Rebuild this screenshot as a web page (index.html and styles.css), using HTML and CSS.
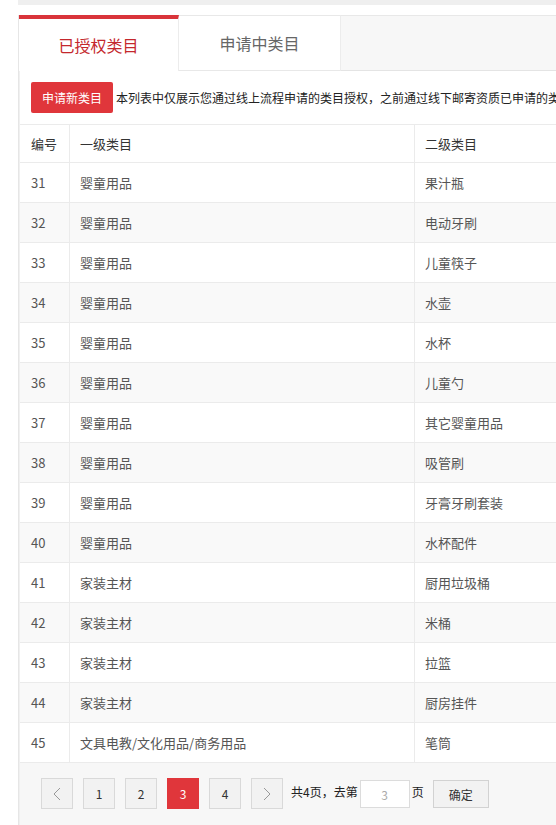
FILE: index.html
```html
<!DOCTYPE html>
<html lang="zh-CN">
<head>
<meta charset="utf-8">
<title>类目授权</title>
<link rel="stylesheet" href="styles.css">
</head>
<body>
<div class="wrap">
  <div class="top-strip"></div>
  <div class="panel">
    <div class="tabs">
      <div class="tab active">已授权类目</div>
      <div class="tab">申请中类目</div>
      <div class="tab-rest"></div>
    </div>
    <div class="content">
      <div class="toolbar">
        <button class="btn-apply">申请新类目</button>
        <span class="notice">本列表中仅展示您通过线上流程申请的类目授权，之前通过线下邮寄资质已申请的类</span>
      </div>
      <table class="grid">
        <thead>
          <tr><th class="c-no">编号</th><th class="c-l1">一级类目</th><th class="c-l2">二级类目</th></tr>
        </thead>
        <tbody>
          <tr><td>31</td><td>婴童用品</td><td>果汁瓶</td></tr>
          <tr><td>32</td><td>婴童用品</td><td>电动牙刷</td></tr>
          <tr><td>33</td><td>婴童用品</td><td>儿童筷子</td></tr>
          <tr><td>34</td><td>婴童用品</td><td>水壶</td></tr>
          <tr><td>35</td><td>婴童用品</td><td>水杯</td></tr>
          <tr><td>36</td><td>婴童用品</td><td>儿童勺</td></tr>
          <tr><td>37</td><td>婴童用品</td><td>其它婴童用品</td></tr>
          <tr><td>38</td><td>婴童用品</td><td>吸管刷</td></tr>
          <tr><td>39</td><td>婴童用品</td><td>牙膏牙刷套装</td></tr>
          <tr><td>40</td><td>婴童用品</td><td>水杯配件</td></tr>
          <tr><td>41</td><td>家装主材</td><td>厨用垃圾桶</td></tr>
          <tr><td>42</td><td>家装主材</td><td>米桶</td></tr>
          <tr><td>43</td><td>家装主材</td><td>拉篮</td></tr>
          <tr><td>44</td><td>家装主材</td><td>厨房挂件</td></tr>
          <tr><td>45</td><td>文具电教/文化用品/商务用品</td><td>笔筒</td></tr>
        </tbody>
      </table>
      <div class="pager">
        <span class="pg prev"><svg width="8" height="14" viewBox="0 0 8 14"><path d="M7 1 L1 7 L7 13" fill="none" stroke="#999" stroke-width="1"/></svg></span>
        <span class="pg">1</span>
        <span class="pg">2</span>
        <span class="pg current">3</span>
        <span class="pg">4</span>
        <span class="pg next"><svg width="8" height="14" viewBox="0 0 8 14"><path d="M1 1 L7 7 L1 13" fill="none" stroke="#999" stroke-width="1"/></svg></span>
        <span class="pg-text">共4页，去第</span>
        <input class="pg-input" type="text" value="3">
        <span class="pg-unit">页</span>
        <button class="pg-ok">确定</button>
      </div>
    </div>
  </div>
</div>
</body>
</html>
```

FILE: styles.css
```css
html, body {
  margin: 0;
  padding: 0;
  background: #fff;
  overflow: hidden;
}
body {
  font-family: "Microsoft YaHei", "Noto Sans CJK SC", "Noto Sans", sans-serif;
  color: #333;
  font-size: 12px;
}
.wrap {
  margin-left: 18px;
  width: 538px;
  overflow: hidden;
}
.top-strip {
  height: 5px;
  background: #efefef;
  margin-bottom: 10px;
}
.panel {
  border-left: 1px solid #e6e6e6;
}
.tabs {
  display: flex;
  height: 56px;
}
.tab {
  width: 160px;
  box-sizing: border-box;
  border-top: 1px solid #e8e8e8;
  border-right: 1px solid #ececec;
  border-bottom: 1px solid #e8e8e8;
  background: #fff;
  display: flex;
  align-items: center;
  justify-content: center;
  font-size: 16px;
  color: #666;
}
.tab + .tab {
  width: 162px;
}
.tab.active {
  border-top: 4px solid #d9343a;
  border-bottom: none;
  color: #c4282d;
}
.tab-rest {
  flex: 1;
  background: #f7f7f7;
  border-top: 1px solid #e8e8e8;
  border-bottom: 1px solid #e4e4e4;
}
.content {
  border-left: 1px solid #f0f0f0;
}
.toolbar {
  display: flex;
  align-items: center;
  padding: 11px 0 11px 11px;
  overflow: hidden;
}
.btn-apply {
  flex: none;
  width: 82px;
  height: 31px;
  border: none;
  border-radius: 2px;
  background: #e0363b;
  color: #fff;
  font-family: inherit;
  font-size: 12px;
  padding: 0;
  margin-right: 3px;
}
.notice {
  white-space: nowrap;
  font-size: 12px;
  color: #222;
}
.grid {
  border-collapse: separate;
  border-spacing: 0;
  table-layout: fixed;
  width: 740px;
}
.grid th, .grid td {
  text-align: left;
  padding: 0 10px 0 10px;
  border-bottom: 1px solid #ebebeb;
  border-right: 1px solid #ebebeb;
  white-space: nowrap;
  font-size: 13px;
  line-height: 39px;
  color: #555;
}
.grid th {
  border-top: 1px solid #ebebeb;
  font-weight: normal;
  color: #333;
  line-height: 37px;
}
.grid th:first-child, .grid td:first-child {
  padding-left: 11px;
}
.c-no { width: 50px; box-sizing: border-box; }
.c-l1 { width: 345px; box-sizing: border-box; }
.c-l2 { width: 345px; box-sizing: border-box; }
.grid tbody tr:nth-child(even) td {
  background: #f9f9f9;
}
.pager {
  background: #f7f7f7;
  height: 80px;
  display: flex;
  align-items: flex-start;
  padding: 15px 0 0 21px;
  box-sizing: border-box;
}
.pg {
  width: 32px;
  height: 31px;
  box-sizing: border-box;
  border: 1px solid #d9d9d9;
  background: #f2f2f2;
  display: flex;
  align-items: center;
  justify-content: center;
  margin-right: 10px;
  font-size: 12px;
  color: #333;
}
.pg.current {
  background: #e0363b;
  border-color: #e0363b;
  color: #fff;
}
.pg.next {
  margin-right: 8px;
}
.pg-text, .pg-unit {
  font-size: 12px;
  line-height: 28px;
  color: #222;
}
.pg-input {
  width: 50px;
  height: 28px;
  box-sizing: border-box;
  border: 1px solid #dcdcdc;
  background: #fff;
  text-align: center;
  font-family: inherit;
  font-size: 12px;
  color: #aaa;
  margin: 2px 2px 0 2px;
  padding: 0;
  outline: none;
}
.pg-ok {
  width: 56px;
  height: 28px;
  box-sizing: border-box;
  border: 1px solid #d2d2d2;
  background: #f2f2f2;
  font-family: inherit;
  font-size: 12px;
  color: #333;
  margin: 2px 0 0 9px;
  padding: 0;
}
```
